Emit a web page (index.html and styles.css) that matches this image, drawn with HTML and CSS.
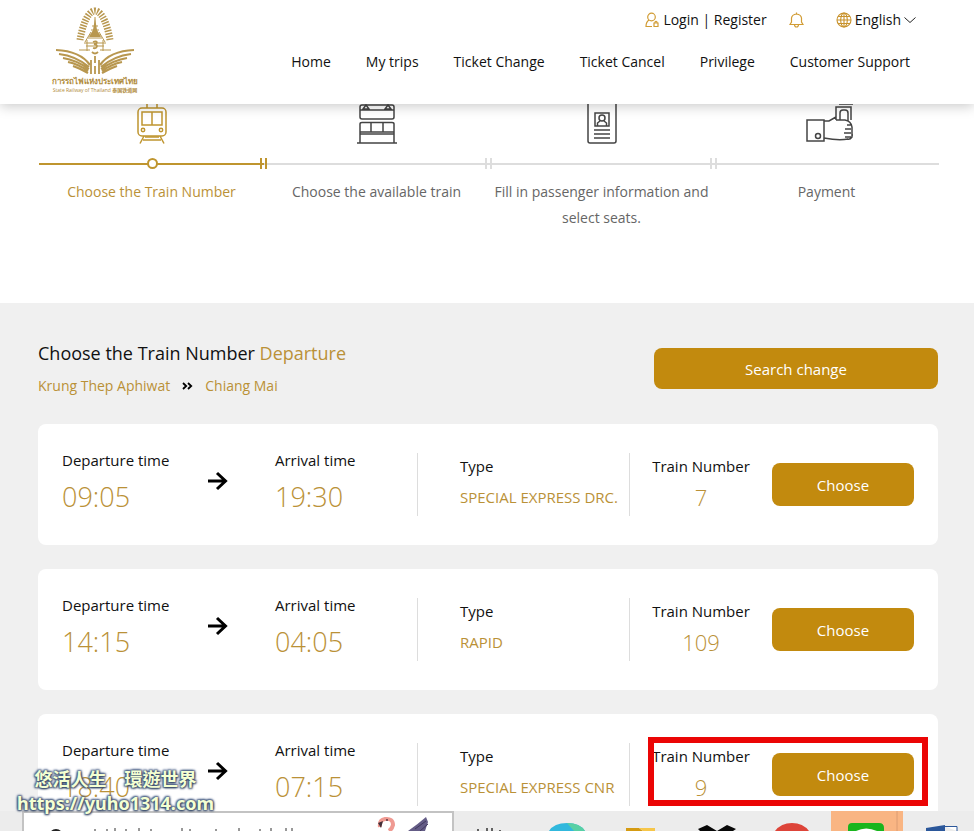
FILE: index.html
```html
<!DOCTYPE html>
<html lang="en">
<head>
<meta charset="utf-8">
<title>Choose the Train Number</title>
<link rel="stylesheet" href="styles.css">
</head>
<body>
<div class="page">
  <header class="header">
    <a class="brand" href="#" aria-label="State Railway of Thailand">
      <svg class="emblem" viewBox="0 0 82 70" aria-hidden="true">
        <g fill="none" stroke="#b8974f">
          <path stroke-width="7" stroke-dasharray="1.5 1.3" d="M26 34C28 22 33 5 41 5C49 5 54 22 56 34"/>
          <path stroke-width="1" d="M41 11V24M37 26L31 36M45 26L51 36M33 34V45M49 34V45M30 37H52M32 40H50M25 44H36M46 44H57M38 20H44M37 24H45M35 29H47M34 32H48"/>
          <path stroke-width="1.800" d="M39 36C44 34 44 38 40 38C45 39 43 43 39 42M38 46Q41 49 44 46M37 54V68M45 54V68M41 50V57M41 60V68"/>
          <path stroke-width="2.200" d="M36 59Q26 45 2 44M35 61Q22 50 5 48M35 63Q22 54 9 52M34 65Q24 58 14 56M34 67Q25 62 19 60M46 59Q56 45 80 44M47 61Q60 50 77 48M47 63Q60 54 73 52M48 65Q58 58 68 56M48 67Q57 62 63 60"/>
        </g>
        <path fill="#b8974f" d="M41 12L43 24L47 31H35L39 24Z"/>
      </svg>
      <span class="brand-th">การรถไฟแห่งประเทศไทย</span>
      <span class="brand-en">State Railway of Thailand <b>泰国铁道网</b></span>
    </a>
    <div class="header-right">
      <div class="tools">
        <a class="tool" href="#">
          <svg width="14" height="16" viewBox="0 0 14 16" fill="none" stroke="#d19c34" stroke-width="1.200" aria-hidden="true"><circle cx="6.500" cy="5" r="3.800"/><path d="M4 8Q1 10 1 14.500H7"/><path d="M9 11H13V14.500H9ZM10 11V10Q11 8.500 12 10V11"/></svg>
          <span>Login | Register</span>
        </a>
        <a class="tool" href="#" aria-label="Notifications">
          <svg width="15" height="16" viewBox="0 0 15 16" fill="none" stroke="#d19c34" stroke-width="1.200" aria-hidden="true"><path d="M1 12.500H14L12.500 10V6Q12 2.500 7.500 2Q3 2.500 2.500 6V10ZM7.500 2V.5M5.500 12.500Q5.500 15 7.500 15Q9.500 15 9.500 12.500"/></svg>
        </a>
        <button class="tool language" type="button">
          <svg width="16" height="16" viewBox="0 0 16 16" fill="none" stroke="#c8922b" stroke-width="1.100" aria-hidden="true"><circle cx="8" cy="8" r="7"/><ellipse cx="8" cy="8" rx="3.300" ry="7"/><path d="M8 1V15M1 8H15M2 4.500H14M2 11.500H14"/></svg>
          <span>English</span>
          <svg width="12" height="8" viewBox="0 0 12 8" fill="none" stroke="#222" aria-hidden="true"><path d="M.5 1.500L6 6.500L11.500 1.500"/></svg>
        </button>
      </div>
      <nav class="nav">
        <a href="#">Home</a><a href="#">My trips</a><a href="#">Ticket Change</a><a href="#">Ticket Cancel</a><a href="#">Privilege</a><a href="#">Customer Support</a>
      </nav>
    </div>
  </header>

  <ol class="steps">
    <li class="step active">
      <svg width="52" height="40" viewBox="0 0 52 40" fill="none" stroke="#bf952f" stroke-width="1.500" aria-hidden="true"><path d="M21 0V4M31 0V4M19 33H33M17 36H35M18 32L14 39.500M34 32L38 39.500"/><rect x="12" y="4" width="28" height="28" rx="4"/><rect x="16" y="8" width="20" height="13"/><path d="M26 8V21"/><circle cx="17" cy="26" r="1.700"/><circle cx="35" cy="26" r="1.700"/></svg>
      <div class="track"></div>
      <span>Choose the Train Number</span>
    </li>
    <li class="step">
      <svg width="52" height="40" viewBox="0 0 52 40" fill="none" stroke="#444" stroke-width="1.500" aria-hidden="true"><path d="M9 6H43M15 1L12 5H18ZM37 1L34 5H40ZM20 19V28M32 19V28M9 30H43M9 28H43M6 39H46M9 39V20Q9 18.500 11 18.500H41Q43 18.500 43 20V39"/><rect x="9" y="1" width="34" height="14" rx="2"/></svg>
      <div class="track"></div>
      <span>Choose the available train</span>
    </li>
    <li class="step">
      <svg width="52" height="40" viewBox="0 0 52 40" fill="none" stroke="#444" stroke-width="1.500" aria-hidden="true"><path d="M12 0V37Q12 39 14 39H38Q40 39 40 37V0M18 26H34M18 30H34M18 34H34"/><rect x="19" y="9" width="14" height="13"/><circle cx="26" cy="14" r="3"/><path d="M21.500 22V19L24 17M30.500 22V19L28 17"/></svg>
      <div class="track"></div>
      <span>Fill in passenger information and select seats.</span>
    </li>
    <li class="step">
      <svg width="52" height="40" viewBox="-4 0 52 40" fill="none" stroke="#444" stroke-width="1.500" aria-hidden="true"><rect x="2" y="16" width="17" height="21"/><circle cx="13" cy="32" r="2.500"/><path d="M19 17H24L31 13M19 34Q34 37 43 35M31 16V3H46V16M34 0H49V31H47M35 16V9Q35 6 38 6H40Q43 6 43 9V17M31 16H40Q46 17 47 23V33Q45 36 42 35M42 21H46M40 25H46M39 29H46M40 33H46"/></svg>
      <div class="track"></div>
      <span>Payment</span>
    </li>
  </ol>

  <main class="results">
    <div class="results-head">
      <div>
        <h1>Choose the Train Number <em>Departure</em></h1>
        <p class="route"><span>Krung Thep Aphiwat</span>
          <svg width="11" height="8" viewBox="0 0 11 8" fill="none" stroke="#000" stroke-width="1.800" aria-label="to"><path d="M1 1L4.200 4L1 7M6 1L9.200 4L6 7"/></svg>
          <span>Chiang Mai</span></p>
      </div>
      <button class="btn search" type="button">Search change</button>
    </div>

    <article class="card">
      <div class="cell time"><span>Departure time</span><strong>09:05</strong></div>
      <svg class="arrow" viewBox="0 0 20 20" aria-hidden="true"><path d="M0 10H17M9 2L17.500 10L9 18"/></svg>
      <div class="cell time"><span>Arrival time</span><strong>19:30</strong></div>
      <div class="cell type"><span>Type</span><strong>SPECIAL EXPRESS DRC.</strong></div>
      <div class="cell number"><span>Train Number</span><strong>7</strong></div>
      <button class="btn" type="button">Choose</button>
    </article>
    <article class="card">
      <div class="cell time"><span>Departure time</span><strong>14:15</strong></div>
      <svg class="arrow" viewBox="0 0 20 20" aria-hidden="true"><path d="M0 10H17M9 2L17.500 10L9 18"/></svg>
      <div class="cell time"><span>Arrival time</span><strong>04:05</strong></div>
      <div class="cell type"><span>Type</span><strong>RAPID</strong></div>
      <div class="cell number"><span>Train Number</span><strong>109</strong></div>
      <button class="btn" type="button">Choose</button>
    </article>
    <article class="card marked">
      <div class="cell time"><span>Departure time</span><strong>18:40</strong></div>
      <svg class="arrow" viewBox="0 0 20 20" aria-hidden="true"><path d="M0 10H17M9 2L17.500 10L9 18"/></svg>
      <div class="cell time"><span>Arrival time</span><strong>07:15</strong></div>
      <div class="cell type"><span>Type</span><strong>SPECIAL EXPRESS CNR</strong></div>
      <div class="cell number"><span>Train Number</span><strong>9</strong></div>
      <button class="btn" type="button">Choose</button>
    </article>
  </main>
</div>

<div class="watermark"><span>悠活人生　環遊世界</span><span>https://yuho1314.com</span></div>

<footer class="taskbar">
  <div class="task-search">
    <svg width="430" height="18" viewBox="0 0 430 18" aria-hidden="true">
      <circle cx="32" cy="23" r="6" fill="none" stroke="#222" stroke-width="2"/>
      <path d="M71 16V18M83 16V18M91 15V18M102 16V18M115 15V18M127 16V18M158 15V18M166 16V18M192 16V18M215 15V18M236 16V18M247 15V18M262 15V18M268 15V18" stroke="#333"/>
      <path d="M356 14Q355 7 361 6Q369 5 369 12Q368 16 365 18" fill="none" stroke="#ef9a92" stroke-width="4"/><path d="M354 10L359 8L357 15Z" fill="#413039"/><circle cx="363" cy="7" r="1" fill="#55333d"/>
      <path d="M384 18Q394 11 402 4L404 9L401 18Z" fill="#645c86"/><path d="M391 16L402 8M396 18L404 11" stroke="#40385e"/>
    </svg>
  </div>
  <svg class="task-icons" viewBox="454 811 520 20" aria-hidden="true">
    <path d="M831 811H903V831H831Z" fill="#f9b583"/><path d="M897 811V831" stroke="#dc9c72"/>
    <path d="M478 829V831M487 828V831M492 828V831M500 830V831" stroke="#333" stroke-width="1.500"/>
    <path d="M549 831Q554 823 567 823Q580 823 585 831Z" fill="#31b8dd"/><path d="M567 823Q580 823 585 831H574Z" fill="#58d0a4"/>
    <path d="M626 831V828H639L643 831Z" fill="#d59b12"/><path d="M639 828H655V831H643Z" fill="#f6c64a"/>
    <path d="M698 829L707 825L717 831L727 825L736 829L733 831H700Z" fill="#080808"/>
    <path d="M775 831Q781 823 792 823Q803 823 809 831Z" fill="#dd4439"/>
    <path d="M848 831V827Q848 823 852 823H879Q884 823 884 828V831Z" fill="#19b51d"/><path d="M856 831Q866 826 877 831Z" fill="#fff"/>
    <path d="M926 828L945 825V831H926Z" fill="#2b579a"/><path d="M945 826.500H957V831" fill="#fff" stroke="#2b579a"/>
  </svg>
</footer>
</body>
</html>
```
FILE: styles.css
```css
*, *::before, *::after { box-sizing: border-box; }
body {
  margin: 0;
  height: 100vh;
  display: flex;
  flex-direction: column;
  overflow: hidden;
  background: #fff;
  color: #111;
  font: 400 15px/24px "Open Sans", "Noto Sans CJK TC", sans-serif;
}
a { color: inherit; text-decoration: none; }
button { font: inherit; color: inherit; border: 0; background: none; padding: 0; }
svg { display: block; flex: none; }
.page { flex: 1; min-height: 0; overflow: hidden; }

.header {
  position: relative;
  display: flex;
  justify-content: space-between;
  height: 104px;
  padding: 6px 64px 0 50px;
  background: #fff;
  box-shadow: 0 2px 12px rgba(0, 0, 0, .22);
  font-size: 14px;
}
.brand { display: flex; flex-direction: column; align-items: center; width: 90px; color: #b08b3b; white-space: nowrap; }
.emblem { width: 82px; height: 70px; }
.brand-th { font-size: 8px; line-height: 10px; font-weight: 600; }
.brand-en { font-size: 5px; line-height: 8px; }
.header-right { display: flex; flex-direction: column; align-items: flex-end; gap: 18px; padding-top: 2px; }
.tools { display: flex; gap: 22px; }
.tool { display: flex; align-items: center; gap: 4px; }
.language { gap: 3px; margin-left: 10px; margin-right: -6px; }
.nav { display: flex; gap: 35px; }

.steps { display: grid; grid-template-columns: repeat(4, 1fr); margin: 0; padding: 0 35px 0 39px; list-style: none; height: 199px; font-size: 14px; line-height: 26px; color: #666; text-align: center; }
.step { display: flex; flex-direction: column; align-items: center; }
.step span { padding: 0 4px; }
.track { position: relative; width: 100%; height: 11px; margin: 14px 0 10px; background: linear-gradient(#ddd, #ddd) center / 100% 2px no-repeat; }
.step:not(:last-child) .track::after { content: ""; position: absolute; z-index: 1; right: -3px; width: 7px; height: 11px; border: solid #ddd; border-width: 0 2px; }
.active { color: #ba9137; }
.active .track { background-image: linear-gradient(#bf952f, #bf952f); }
.active .track::before { content: ""; position: absolute; left: calc(50% - 5px); width: 11px; height: 11px; border: 2px solid #bf952f; border-radius: 50%; background: #fff; }
.step.active .track::after { border-color: #bf952f; }

.results { padding: 36px 36px 24px 38px; background: #f0f0f0; }
.results-head { display: flex; justify-content: space-between; align-items: center; height: 85px; padding-bottom: 26px; }
h1 { margin: 0; font-size: 18px; line-height: 26px; font-weight: 400; }
em { font-style: normal; color: #ba9137; }
.route { display: flex; align-items: center; gap: 12px; margin: 8px 0 0; font-size: 14px; line-height: 24px; color: #ba9137; }
.btn { height: 43px; border-radius: 8px; background: #c28a0e; color: #fff; }
.search { width: 284px; height: 41px; }

.card { display: grid; grid-template-columns: repeat(12, 1fr); align-items: center; height: 121px; margin-bottom: 24px; padding: 0 24px; border-radius: 8px; background: #fff; }
.cell { display: flex; flex-direction: column; justify-content: center; grid-column: span 2; white-space: nowrap; }
.cell strong { color: #ba9137; font-weight: 300; }
.time strong { font-size: 27px; line-height: 50px; }
.arrow { width: 20px; height: 28px; padding-bottom: 8px; box-sizing: content-box; height: 20px; fill: none; stroke: #000; stroke-width: 3; margin-left: 4px; }
.type { grid-column: span 3; height: 63px; padding-left: 42px; border: solid #ddd; border-width: 0 1px; }
.type strong { font-weight: 400; line-height: 38px; }
.number { align-items: center; }
.number strong { font-size: 22px; line-height: 38px; }
.card .btn { grid-column: span 2; }
.marked { position: relative; }
.marked::after { content: ""; position: absolute; top: 23px; right: 10px; width: 280px; height: 69px; border: 6px solid #eb0505; }

.watermark { position: absolute; left: 17px; bottom: 16px; display: flex; flex-direction: column; align-items: center; color: #f4ffd2; font: 700 18px/24px "Noto Sans", "Noto Sans CJK TC", sans-serif; text-shadow: 1px 1px 2px #344767, -1px -1px 2px #50658b, 1px -1px 2px #50658b, -1px 1px 2px #344767; }

.taskbar { display: flex; height: 20px; padding-left: 22px; background: #ececec; overflow: hidden; }
.task-search { width: 432px; flex: none; border: solid #c3c3c3; border-width: 2px 2px 0; background: #fff; }
.task-icons { width: 520px; height: 20px; }
```
